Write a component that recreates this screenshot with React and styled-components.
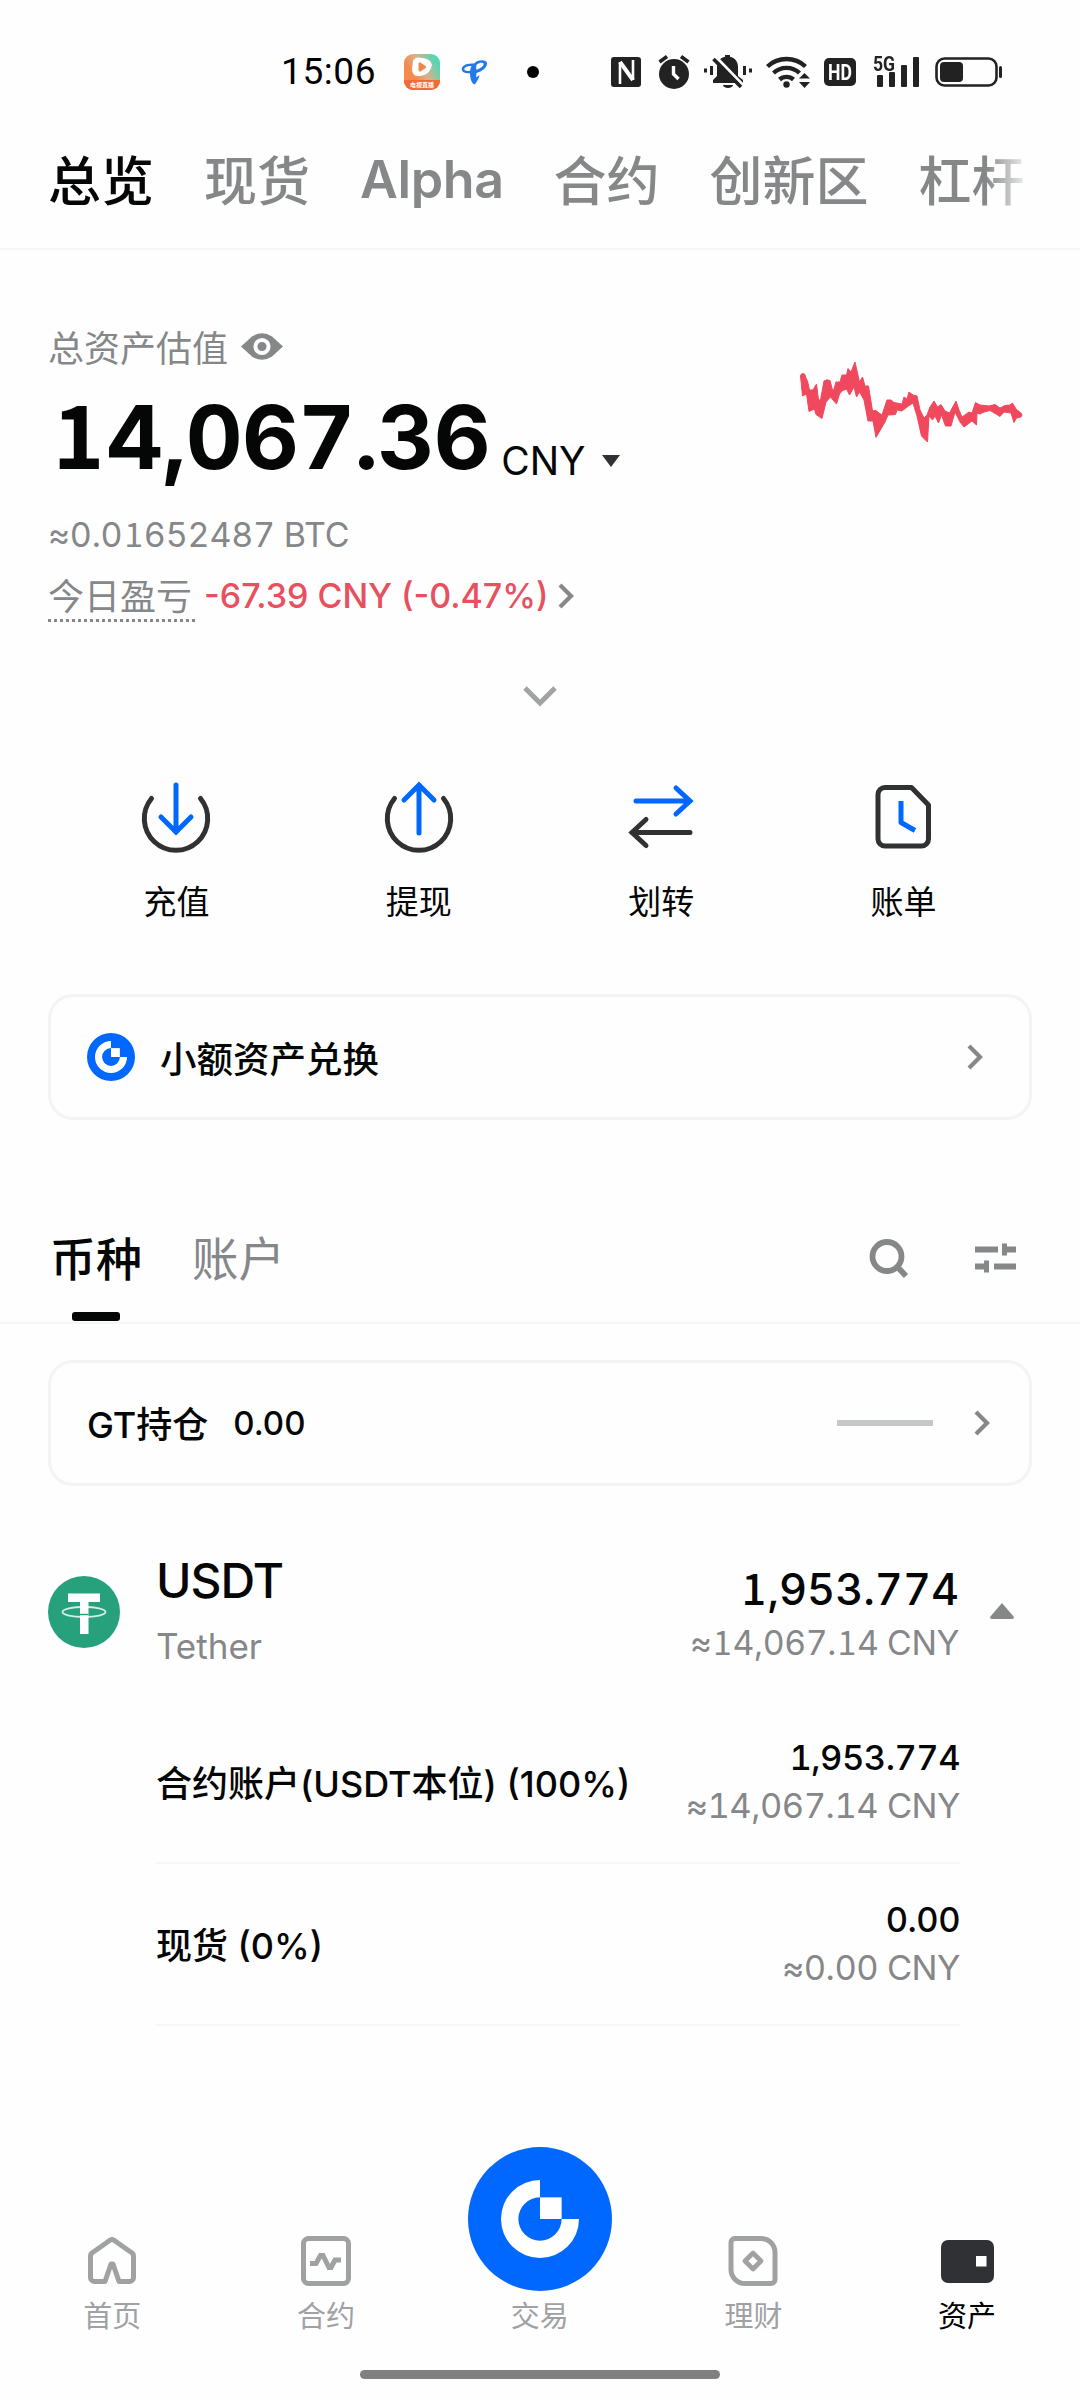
import React from "react";
import styled, { createGlobalStyle } from "styled-components";

const GlobalStyle = createGlobalStyle`
  * { box-sizing: border-box; }
  body {
    margin: 0;
    background: #fefefe;
    color: #050606;
    font-family: Inter, "Noto Sans CJK SC", sans-serif;
  }
  svg { display: block; flex: none; }
`;

const GREY = "#858789";
const BLUE = "#0068ff";

const Screen = styled.main`
  width: 1080px;
  height: 2400px;
  display: flex;
  flex-direction: column;
  overflow: hidden;
`;

const Text = styled.span`
  display: block;
  white-space: nowrap;
  font-size: ${(p) => p.$size}px;
  line-height: ${(p) => p.$line || 44}px;
  font-weight: ${(p) => p.$weight || 400};
  color: ${(p) => p.$color || "#050606"};
  letter-spacing: ${(p) => p.$track || 0}px;
  padding-top: ${(p) => p.$drop || 0}px;
`;

const Numeric = styled(Text)`
  font-feature-settings: "tnum";
`;

const One = styled.span`
  font-family: "Noto Sans CJK SC", sans-serif;
  line-height: 0;
  padding: 0 0.03em 0 0.05em;
`;

/* Figures whose "1" stands on a foot serif. */
const SlabNumeric = ({ children, ...rest }) => (
  <Numeric {...rest}>
    {children.split(/(1)/).map((part, i) => (part === "1" ? <One key={i}>1</One> : part))}
  </Numeric>
);

/* ---------- status bar ---------- */

const StatusBar = styled.header`
  height: 110px;
  padding: 34px 77px 0 281px;
  display: flex;
  justify-content: space-between;
  align-items: flex-start;
`;

const StatusGroup = styled.div`
  height: 76px;
  display: flex;
  align-items: center;
`;

const Clock = styled.time`
  width: 123px;
  font: 400 37px/78px Roboto, sans-serif;
  letter-spacing: 0.6px;
  color: #000;
`;

const VideoBadge = styled.div`
  width: 36px;
  height: 36px;
  border-radius: 9px;
  display: flex;
  flex-direction: column;
  align-items: center;
  overflow: hidden;
  background: linear-gradient(60deg, #f58a4c 30%, #dcb08a 55%, #57d6b4 85%);
`;

const VideoCaption = styled.span`
  width: 36px;
  height: 10px;
  margin-top: auto;
  background: #f26a35;
  color: #fff;
  text-align: center;
  font: 700 6px/9px "Noto Sans CJK SC", sans-serif;
`;

const Dot = styled.i`
  width: 12px;
  height: 12px;
  margin-left: 39px;
  border-radius: 50%;
  background: #000;
`;

const HdBadge = styled.span`
  width: 32px;
  height: 28px;
  margin: 0 17px 0 13px;
  border-radius: 5px;
  background: #222;
  color: #fff;
  display: flex;
  justify-content: center;
`;

const Narrow = styled.span`
  font: 700 ${(p) => p.$size}px/${(p) => p.$line}px Roboto, sans-serif;
  transform: scaleX(${(p) => p.$x});
  transform-origin: ${(p) => p.$origin || "center"};
`;

const Signal = styled.div`
  position: relative;
  width: 46px;
  height: 34px;
  margin-right: 16px;
  display: flex;
  align-items: flex-end;
  gap: 6px;
  padding: 0 0 2px 4px;
`;

const Bar = styled.i`
  width: 6px;
  height: ${(p) => p.$h}px;
  border-radius: 1px;
  background: #222;
`;

const NetLabel = styled(Narrow)`
  position: absolute;
  left: 0;
  top: -1px;
  color: #222;
`;

/* ---------- top tabs ---------- */

const TopTabs = styled.nav`
  height: 140px;
  padding: 0 52px 0 48px;
  border-bottom: 2px solid #f4f5f5;
`;

const TopTabTrack = styled.div`
  display: flex;
  gap: 50px;
  overflow: hidden;
  mask-image: linear-gradient(90deg, #000 calc(100% - 42px), transparent calc(100% + 4px));
`;

/* ---------- summary ---------- */

const Summary = styled.section`
  display: flex;
  justify-content: space-between;
  padding: 76px 54px 0 48px;
`;

const SummaryMain = styled.div`
  display: flex;
  flex-direction: column;
`;

const Line = styled.div`
  display: flex;
  align-items: center;
  gap: ${(p) => p.$gap || 0}px;
  margin-top: ${(p) => p.$top || 0}px;
`;

const BalanceLine = styled(Line)`
  align-items: flex-end;
  height: 80px;
`;

const CurrencyPick = styled.div`
  display: flex;
  align-items: center;
  gap: 16px;
`;

const DottedLabel = styled.div`
  width: 147px;
  height: 47px;
  margin-bottom: -6px;
  border-bottom: 3px dotted ${GREY};
`;

const ChartBox = styled.div`
  padding-top: 30px;
`;

const Expand = styled.div`
  display: flex;
  justify-content: center;
  padding-top: 70px;
`;

/* ---------- actions ---------- */

const Actions = styled.section`
  display: grid;
  grid-template-columns: repeat(4, 242.4px);
  justify-content: center;
  margin-top: 71px;
`;

const Action = styled.div`
  display: flex;
  flex-direction: column;
  align-items: center;
  gap: 26px;
`;

/* ---------- cards ---------- */

const Card = styled.section`
  height: 126px;
  margin: ${(p) => p.$top}px 48px 0;
  padding: 0 ${(p) => p.$right}px 0 36px;
  border: 3px solid #f3f4f4;
  border-radius: 25px;
  display: flex;
  align-items: center;
  gap: 25px;
`;

const Spacer = styled.div`
  flex: 1;
`;

const FlatLine = styled.i`
  width: 96px;
  height: 6px;
  margin-right: 16px;
  background: #c5c7c8;
`;

/* ---------- asset tabs ---------- */

const AssetTabs = styled.nav`
  height: 108px;
  margin-top: 96px;
  padding: 0 64px 0 50px;
  border-bottom: 2px solid #f4f5f5;
  display: flex;
  align-items: flex-start;
`;

const AssetTab = styled.div`
  display: flex;
  flex-direction: column;
  align-items: center;
  gap: 10px;
  margin-right: 50px;
`;

const Indicator = styled.i`
  width: 48px;
  height: 9px;
  border-radius: 3px;
  background: #050606;
`;

const Tools = styled.div`
  height: 84px;
  margin-left: auto;
  display: flex;
  align-items: center;
  gap: 66px;
`;

/* ---------- coin list ---------- */

const Coin = styled.section`
  height: 168px;
  margin-top: 48px;
  padding: 0 66px 0 48px;
  display: flex;
  align-items: flex-start;
`;

const CoinLogo = styled.div`
  padding: 42px 36px 0 0;
`;

const Stack = styled.div`
  display: flex;
  flex-direction: column;
  align-items: ${(p) => (p.$end ? "flex-end" : "flex-start")};
  padding-top: ${(p) => p.$top || 0}px;
  gap: ${(p) => p.$gap || 0}px;
`;

const Collapse = styled.div`
  padding: 69px 0 0 31px;
`;

const AccountRow = styled.div`
  height: 162px;
  margin: 0 120px 0 156px;
  border-bottom: 2px solid #f5f6f6;
  display: flex;
  align-items: center;
  justify-content: space-between;
`;

/* ---------- bottom navigation ---------- */

const BottomNav = styled.nav`
  height: 253px;
  margin-top: auto;
  display: flex;
  flex-direction: column;
  align-items: center;
`;

const NavItems = styled.div`
  display: grid;
  grid-template-columns: repeat(5, 213.7px);
  width: 100%;
  padding-left: 5.5px;
`;

const NavItem = styled.div`
  height: 192px;
  display: flex;
  flex-direction: column;
  align-items: center;
  justify-content: flex-end;
`;

const NavIcon = styled.div`
  flex: 1;
  display: flex;
  align-items: ${(p) => (p.$raised ? "flex-start" : "flex-end")};
  padding-bottom: ${(p) => (p.$raised ? 0 : 9)}px;
`;

const HomeBar = styled.i`
  width: 360px;
  height: 9px;
  margin-top: 31px;
  border-radius: 5px;
  background: #808080;
`;

/* ---------- drawings ---------- */

const Chevron = () => (
  <svg width="16" height="26" viewBox="0 0 16 26" fill="none" stroke={GREY} strokeWidth="4.200">
    <path d="M2 2 13 13 2 24" />
  </svg>
);

const GateLogo = ({ size, r }) => {
  const c = 72;
  const i = r * 0.555;
  return (
    <svg width={size} height={size} viewBox="0 0 144 144">
      <circle cx={c} cy={c} r="72" fill={BLUE} />
      <path
        fill="#fff"
        d={`M${c} ${c - r}A${r} ${r} 0 1 0 ${c + r} ${c}H${c + i}A${i} ${i} 0 1 1 ${c} ${c - i}Z`}
      />
      <rect x={c} y={c - i} width={i} height={i} fill="#fff" />
    </svg>
  );
};

const TelecomMark = styled.svg`
  margin-left: 21px;
`;

const TelecomLogo = () => (
  <TelecomMark width="27" height="26" viewBox="0 0 27 26" fill="#2378ea">
    <path d="M12 4.500C5 4 0 7 .8 11 1.500 14 5 14.500 9 14.200 9 19 10 23 13 25.500 14.500 25.500 16 22 17.500 19.500L18.500 16 15 18.500 15.500 14C21 12.500 26.500 8.500 26 4 25.500 .8 20 .5 15.500 2.500L13 4.500ZM10.500 7C9.800 8.500 9.300 10 9.100 11.800 6 12.300 3.500 12 3.300 10.300 3.200 8.300 6.500 6.900 10.500 7ZM15.800 5.500C18.500 3.500 22 3 22.600 4.800 23 7 19.500 9.500 15.500 10.700 15 9 15 7 15.800 5.500Z" />
  </TelecomMark>
);

const StatusIcons = () => (
  <svg width="202" height="36" viewBox="610 54 202 36">
    <rect x="612" y="57" width="30" height="30" rx="3" fill="#222" />
    <path d="M621 84V62M634 60V80" fill="none" stroke="#fefefe" strokeWidth="2.600" />
    <path d="M621 62 634 80" fill="none" stroke="#fefefe" strokeWidth="4" />
    <circle cx="675" cy="74" r="15" fill="#222" />
    <path d="M660.500 62 668 56.500M689.500 62 682 56.500" stroke="#222" strokeWidth="3.600" />
    <path d="M674.500 66v8l5 5" fill="none" stroke="#fefefe" strokeWidth="3.400" />
    <path d="M714 83v-3l4-4v-9c0-6 4-9.500 8-10.200V55h5v1.800c5 1 8 5 8 10.200v9l5 4v3z" fill="#222" />
    <path d="M724 85h10a5 3 0 0 1-10 0z" fill="#222" />
    <path d="M717 57 745 86" stroke="#fefefe" strokeWidth="3" />
    <path d="M714.500 59 742 87" stroke="#222" strokeWidth="3.600" />
    <path d="M706.500 68.500v4M712.500 66v9M745.500 66v9M751.500 68.500v4" stroke="#222" strokeWidth="3" />
    <g fill="none" stroke="#222" strokeWidth="4.400">
      <path d="M768.500 66.500a28 28 0 0 1 38 0" />
      <path d="M774.500 73a19 19 0 0 1 26 0" />
      <path d="M780.500 79.500a10.500 10.500 0 0 1 14 0" />
    </g>
    <circle cx="787.500" cy="84.500" r="3.200" fill="#222" />
    <path d="M800 78.500h11l-5.500-5.500zM800 82h11l-5.500 6z" fill="#222" />
  </svg>
);

const Battery = () => (
  <svg width="68" height="30" viewBox="0 0 68 30">
    <rect x="1.500" y="1.500" width="60" height="27" rx="8" fill="none" stroke="#222" strokeWidth="2.600" />
    <rect x="5" y="5" width="23" height="20" rx="4" fill="#222" />
    <rect x="64" y="9" width="3" height="12" rx="1.500" fill="#222" />
  </svg>
);

const Eye = () => (
  <svg width="42" height="30" viewBox="0 0 42 30">
    <path d="M0 13.500 11 3.500Q21-3 31 3.500L42 13.500 31 23.500Q21 30 11 23.500Z" fill={GREY} />
    <circle cx="21" cy="13.500" r="6.600" fill={GREY} stroke="#fefefe" strokeWidth="4" />
  </svg>
);

const Sparkline = () => (
  <svg width="230" height="90" viewBox="797 356 230 90" fill="#f0495e" stroke="#f0495e" strokeLinejoin="round">
    <path
      strokeWidth="1"
      d="M801.500 376Q802 373 804.500 373.500 806.500 374 806.500 377L808.500 381 810.500 390H814L817.500 384 819.500 400H821.500L825 381Q828 379 831 380.500L834 392 837 382H841L843 375H847.500L849 368.500 852 372 856 362 860.500 382 863.500 377 866 386H869.500L873.500 411Q877 409 880 413L883 415 888 400H892L895 402.500 903 404 905 397 908 399 910 392 914 395 918 396 921 410 925 418 928 415 931 407 935 401 938.500 407 942 404.500 946 411 950.500 413 957 401 960 410 963 417 970 412 973 413 976.500 402.500 981 405 990 406 996 404.500 1001 408 1006 405.500 1011 405 1013.500 403 1017 409 1022.500 413.500Q1024 417 1020 417.500L1017.500 418 1015 422.500 1012 413 1005 412 1001 416.500 997 414 991 410.500 985 412 981 414 978 413 977.500 425 973 421 965 427 961 422 956 412 952 426H946.500L942.500 415 939.500 423 936 416 933.500 420 930 416 928.500 442 922.500 436 918 416 914 403 908 407 903 411 898 410 896.500 414.500 889 415 886 422 877 437.500 874 421H869L865 400 860.500 392 857.500 397 855 387 850.500 395 847.500 389 843 391 840.500 394 837.500 404 834 400 831.500 397 827 402 823 418.500 817 414.500 815.500 409 810 411.500 807.500 394 803.500 396Z"
    />
  </svg>
);

const DepositIcon = ({ up }) => (
  <svg width="72" height="76" viewBox="0 0 72 76" fill="none" strokeWidth="5" strokeLinecap="round">
    <path d="M11.500 20.500A31.700 31.700 0 1 0 60.500 20.500" stroke="#303133" />
    {up ? (
      <path d="M36 55V7M21 22 36 7 51 22" stroke={BLUE} />
    ) : (
      <path d="M36 7V54M21 39 36 54 51 39" stroke={BLUE} />
    )}
  </svg>
);

const TransferIcon = () => (
  <svg width="72" height="76" viewBox="0 0 72 76" fill="none" strokeWidth="5" strokeLinecap="round">
    <path d="M11 23H65M51 10 65 23 51 36" stroke={BLUE} />
    <path d="M65 54.500H7M21 41.500 7 54.500 21 67.500" stroke="#303133" />
  </svg>
);

const BillIcon = () => (
  <svg width="72" height="76" viewBox="0 0 72 76" fill="none" strokeWidth="5" strokeLinejoin="round">
    <path d="M17 9.500H43.500L60.500 27V61a7 7 0 0 1-7 7H17a7 7 0 0 1-7-7V16.500a7 7 0 0 1 7-7Z" stroke="#303133" />
    <path d="M33 23V44.500L47 52.500" stroke={BLUE} />
  </svg>
);

const SearchIcon = () => (
  <svg width="40" height="40" viewBox="0 0 40 40" fill="none" stroke={GREY} strokeWidth="5.800">
    <circle cx="18" cy="18.500" r="14.500" />
    <path d="M28 28.500 37 38" />
  </svg>
);

const FilterIcon = () => (
  <svg width="41" height="30" viewBox="0 0 41 30" fill={GREY}>
    <path d="M0 3.500H23V9.500H0zM27 .5H32V3.500H41V9.500H32V12.500H27zM0 20.500H9V17.500H14V29.500H9V26.500H0zM19 20.500H41V26.500H19z" />
  </svg>
);

const TetherLogo = () => (
  <svg width="72" height="72" viewBox="0 0 72 72">
    <circle cx="36" cy="36" r="36" fill="#26a17b" />
    <path d="M20 17.500H52V26H40.500V58H32V26H20z" fill="#fff" />
    <ellipse cx="36" cy="36" rx="21.500" ry="5" fill="none" stroke="#fff" strokeOpacity=".8" strokeWidth="1.800" />
    <path d="M32 38.500h8.500" stroke="#26a17b" strokeWidth="1.500" />
  </svg>
);

const navStroke = { fill: "none", stroke: "#a0a1a3", strokeWidth: 5, strokeLinejoin: "round" };

const HomeIcon = () => (
  <svg width="50" height="50" viewBox="0 0 50 50" {...navStroke}>
    <path d="M18 45.500H7.500a4 4 0 0 1-4-4V20a4 4 0 0 1 1.800-3.300L23 4.300a3.500 3.500 0 0 1 4 0L44.700 16.700A4 4 0 0 1 46.500 20V41.500a4 4 0 0 1-4 4H32L26 28H24L18 45.500Z" />
  </svg>
);

const ContractIcon = () => (
  <svg width="50" height="50" viewBox="0 0 50 50" {...navStroke}>
    <rect x="2.500" y="2.500" width="45" height="45" rx="5" />
    <path d="M9 27.500H15L19.500 19.500H22L28 31.500H30L34 24H40" strokeLinejoin="miter" />
  </svg>
);

const FinanceIcon = () => (
  <svg width="50" height="50" viewBox="0 0 50 50" {...navStroke}>
    <path d="M6.500 2.500H33A14 14 0 0 1 47 16.500V43.500a4 4 0 0 1-4 4H17A14 14 0 0 1 3 33.500V6.500a4 4 0 0 1 3.500-4Z" />
    <path d="M25 17 33 25 25 33 17 25Z" strokeWidth="4.600" />
  </svg>
);

const WalletIcon = () => (
  <svg width="53" height="50" viewBox="0 0 53 50">
    <rect x="0" y="4" width="53" height="43" rx="7" fill="#303134" />
    <rect x="35" y="20" width="10.500" height="10.500" fill="#fff" />
  </svg>
);

/* ---------- data ---------- */

const topTabs = ["总览", "现货", "Alpha", "合约", "创新区", "杠杆"];

const actions = [
  { label: "充值", icon: <DepositIcon /> },
  { label: "提现", icon: <DepositIcon up /> },
  { label: "划转", icon: <TransferIcon /> },
  { label: "账单", icon: <BillIcon /> },
];

const accounts = [
  { name: "合约账户(USDT本位) (100%)", amount: "1,953.774", value: "≈14,067.14 CNY" },
  { name: "现货 (0%)", amount: "0.00", value: "≈0.00 CNY" },
];

const navItems = [
  { label: "首页", icon: <HomeIcon /> },
  { label: "合约", icon: <ContractIcon /> },
  { label: "交易", icon: <GateLogo size={144} r={39} />, raised: true },
  { label: "理财", icon: <FinanceIcon /> },
  { label: "资产", icon: <WalletIcon />, active: true },
];

export default function App() {
  return (
    <Screen>
      <GlobalStyle />
      <StatusBar>
        <StatusGroup>
          <Clock>15:06</Clock>
          <VideoBadge>
            <svg width="24" height="24" viewBox="0 0 24 24">
              <path d="M3 7Q5 2 12 4 21 5 22 11 20 21 10 22 2 23 2 15Z" fill="#fff" />
              <path d="M8.500 9.500Q8.500 8 10.500 8.500L15.500 12Q17 13 15 14.500L10.500 17.500Q8.500 18 8.500 16Z" fill="#ee8650" />
            </svg>
            <VideoCaption>电视直播</VideoCaption>
          </VideoBadge>
          <TelecomLogo />
          <Dot />
        </StatusGroup>
        <StatusGroup>
          <StatusIcons />
          <HdBadge><Narrow $size={22} $line={29} $x={0.8}>HD</Narrow></HdBadge>
          <Signal>
            <NetLabel $size={20} $line={20} $x={0.88} $origin="left">5G</NetLabel>
            {[12, 15, 22, 30].map((h) => (
              <Bar key={h} $h={h} />
            ))}
          </Signal>
          <Battery />
        </StatusGroup>
      </StatusBar>

      <TopTabs>
        <TopTabTrack>
          {topTabs.map((t, i) => {
            const latin = t === "Alpha";
            return (
              <Text
                key={t}
                $size={latin ? 52 : 53}
                $track={latin ? -0.4 : 0}
                $line={136}
                $drop={latin ? 2 : 4}
                $weight={latin ? 600 : 500}
                $color={i ? GREY : undefined}
              >
                {t}
              </Text>
            );
          })}
        </TopTabTrack>
      </TopTabs>

      <Summary>
        <SummaryMain>
          <Line $gap={13}>
            <Text $size={36} $line={42} $drop={2} $color={GREY}>总资产估值</Text>
            <Eye />
          </Line>
          <BalanceLine $top={27} $gap={11}>
            <SlabNumeric $size={88} $line={80} $weight={700} $track={-0.6}>14,067.36</SlabNumeric>
            <CurrencyPick>
              <Text $size={39} $line={32}>CNY</Text>
              <svg width="18" height="12" viewBox="0 0 18 12"><path d="M0 0H18L9 12Z" fill="#303134" /></svg>
            </CurrencyPick>
          </BalanceLine>
          <Line $top={36}>
            <SlabNumeric $size={34} $color={GREY} $track={-0.2}>≈0.01652487 BTC</SlabNumeric>
          </Line>
          <Line $top={18} $gap={9}>
            <DottedLabel><Text $size={36} $color={GREY}>今日盈亏</Text></DottedLabel>
            <Text $size={34} $line={41} $weight={550} $track={0} $color="#e8505f">-67.39 CNY (-0.47%)</Text>
            <Chevron />
          </Line>
        </SummaryMain>
        <ChartBox><Sparkline /></ChartBox>
      </Summary>

      <Expand>
        <svg width="34" height="21" viewBox="0 0 34 21" fill="none" stroke="#a0a2a4" strokeWidth="5">
          <path d="M2 2 17 17 32 2" />
        </svg>
      </Expand>

      <Actions>
        {actions.map((a) => (
          <Action key={a.label}>
            {a.icon}
            <Text $size={33}>{a.label}</Text>
          </Action>
        ))}
      </Actions>

      <Card $top={70} $right={46}>
        <GateLogo size={48} r={48} />
        <Text $size={36.5} $drop={5} $weight={500}>小额资产兑换</Text>
        <Spacer />
        <Chevron />
      </Card>

      <AssetTabs>
        <AssetTab>
          <Text $size={46} $line={86} $weight={500}>币种</Text>
          <Indicator />
        </AssetTab>
        <AssetTab>
          <Text $size={46.5} $line={86} $weight={400} $color={GREY}>账户</Text>
        </AssetTab>
        <Tools>
          <SearchIcon />
          <FilterIcon />
        </Tools>
      </AssetTabs>

      <Card $top={36} $right={39}>
        <Text $size={36} $drop={4} $weight={500}>GT持仓</Text>
        <Text $size={33} $weight={500}>0.00</Text>
        <Spacer />
        <FlatLine />
        <Chevron />
      </Card>

      <Coin>
        <CoinLogo><TetherLogo /></CoinLogo>
        <Stack $top={16} $gap={6}>
          <Text $size={48} $line={62} $weight={450} $track={-1}>USDT</Text>
          <Text $size={35} $line={56} $color={GREY}>Tether</Text>
        </Stack>
        <Spacer />
        <Stack $end $top={28}>
          <SlabNumeric $size={43.3} $line={54} $weight={500}>1,953.774</SlabNumeric>
          <SlabNumeric $size={33.8} $line={54} $track={-0.4} $color={GREY}>≈14,067.14 CNY</SlabNumeric>
        </Stack>
        <Collapse>
          <svg width="24" height="16" viewBox="0 0 24 16"><path d="M12 0 24 14Q24 16 22 16H2Q0 16 0 14Z" fill={GREY} /></svg>
        </Collapse>
      </Coin>

      {accounts.map((a) => (
        <AccountRow key={a.name}>
          <Text $size={36} $drop={3} $weight={500}>{a.name}</Text>
          <Stack $end>
            <Numeric $size={34.5} $line={48} $weight={500} $track={-0.5}>{a.amount}</Numeric>
            <Numeric $size={34.5} $line={48} $track={-0.5} $color={GREY}>{a.value}</Numeric>
          </Stack>
        </AccountRow>
      ))}

      <BottomNav>
        <NavItems>
          {navItems.map((n) => (
            <NavItem key={n.label}>
              <NavIcon $raised={n.raised}>{n.icon}</NavIcon>
              <Text $size={29} $line={44} $color={n.active ? "#000" : "#a0a1a3"}>{n.label}</Text>
            </NavItem>
          ))}
        </NavItems>
        <HomeBar />
      </BottomNav>
    </Screen>
  );
}
